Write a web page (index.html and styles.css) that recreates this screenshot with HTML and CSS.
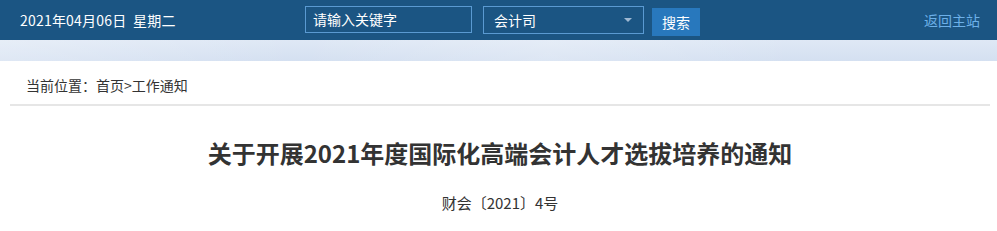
FILE: index.html
```html
<!DOCTYPE html>
<html lang="zh-CN">
<head>
<meta charset="utf-8">
<title>关于开展2021年度国际化高端会计人才选拔培养的通知</title>
<link rel="stylesheet" href="styles.css">
</head>
<body>
<header class="topbar">
  <div class="topbar-inner">
    <div class="date">2021年04月06日&nbsp;&nbsp;星期二</div>
    <form class="search">
      <div class="search-input">请输入关键字</div>
      <div class="search-select">
        <span>会计司</span>
        <span class="caret"></span>
      </div>
      <div class="search-btn">搜索</div>
    </form>
    <a class="home-link">返回主站</a>
  </div>
</header>
<div class="banner"></div>
<main class="content">
  <div class="crumb">当前位置：首页&gt;工作通知</div>
  <h1 class="title">关于开展2021年度国际化高端会计人才选拔培养的通知</h1>
  <p class="docno">财会〔2021〕4号</p>
</main>
</body>
</html>
```

FILE: styles.css
```css
html, body {
  margin: 0;
  padding: 0;
  background: #fff;
  font-family: "Noto Sans CJK SC", "Microsoft YaHei", sans-serif;
}
.topbar {
  background: #1b5583;
  height: 40px;
}
.topbar-inner {
  width: 980px;
  margin: 0 10px;
  height: 40px;
  display: flex;
  align-items: center;
  box-sizing: border-box;
  padding: 0 10px;
}
.date {
  color: #fff;
  font-size: 14px;
  letter-spacing: 0.2px;
  width: 285px;
  line-height: 20px;
}
.search {
  display: flex;
  align-items: center;
  margin: 0;
}
.search-input {
  box-sizing: border-box;
  width: 167px;
  height: 27px;
  border: 1px solid #5a9ad2;
  color: #fff;
  font-size: 14px;
  line-height: 25px;
  padding-left: 7px;
  position: relative;
  top: -1px;
}
.search-select {
  box-sizing: border-box;
  width: 161px;
  height: 28px;
  margin-left: 11px;
  border: 1px solid #5a9ad2;
  color: #fff;
  font-size: 14px;
  display: flex;
  align-items: center;
  justify-content: space-between;
  padding: 0 11px 0 10px;
}
.caret {
  width: 0;
  height: 0;
  border-left: 4px solid transparent;
  border-right: 4px solid transparent;
  border-top: 4px solid #9fb9d3;
}
.search-btn {
  width: 48px;
  height: 28px;
  margin-left: 8px;
  background: #2878bd;
  color: #fff;
  font-size: 14px;
  line-height: 28px;
  text-align: center;
  position: relative;
  top: 2px;
}
.home-link {
  margin-left: auto;
  color: #6db0e8;
  font-size: 14px;
  line-height: 20px;
}
.banner {
  height: 21px;
  background:
    linear-gradient(100deg, rgba(255,255,255,0.25) 0%, rgba(255,255,255,0) 30%, rgba(255,255,255,0.2) 55%, rgba(255,255,255,0) 80%),
    linear-gradient(180deg, #dfe8f5 0%, #d4e0f1 100%);
}
.content {
  width: 980px;
  margin: 0 10px;
}
.crumb {
  font-size: 14px;
  color: #333;
  padding: 14px 0 0 16px;
  height: 29px;
  line-height: 20px;
  border-bottom: 2px solid #e6e6e6;
}
.title {
  margin: 30px 0 0;
  text-align: center;
  font-size: 24px;
  font-weight: bold;
  color: #333;
  line-height: 34px;
}
.docno {
  margin: 23px 0 0;
  text-align: center;
  font-size: 15px;
  color: #333;
  line-height: 20px;
}
```
